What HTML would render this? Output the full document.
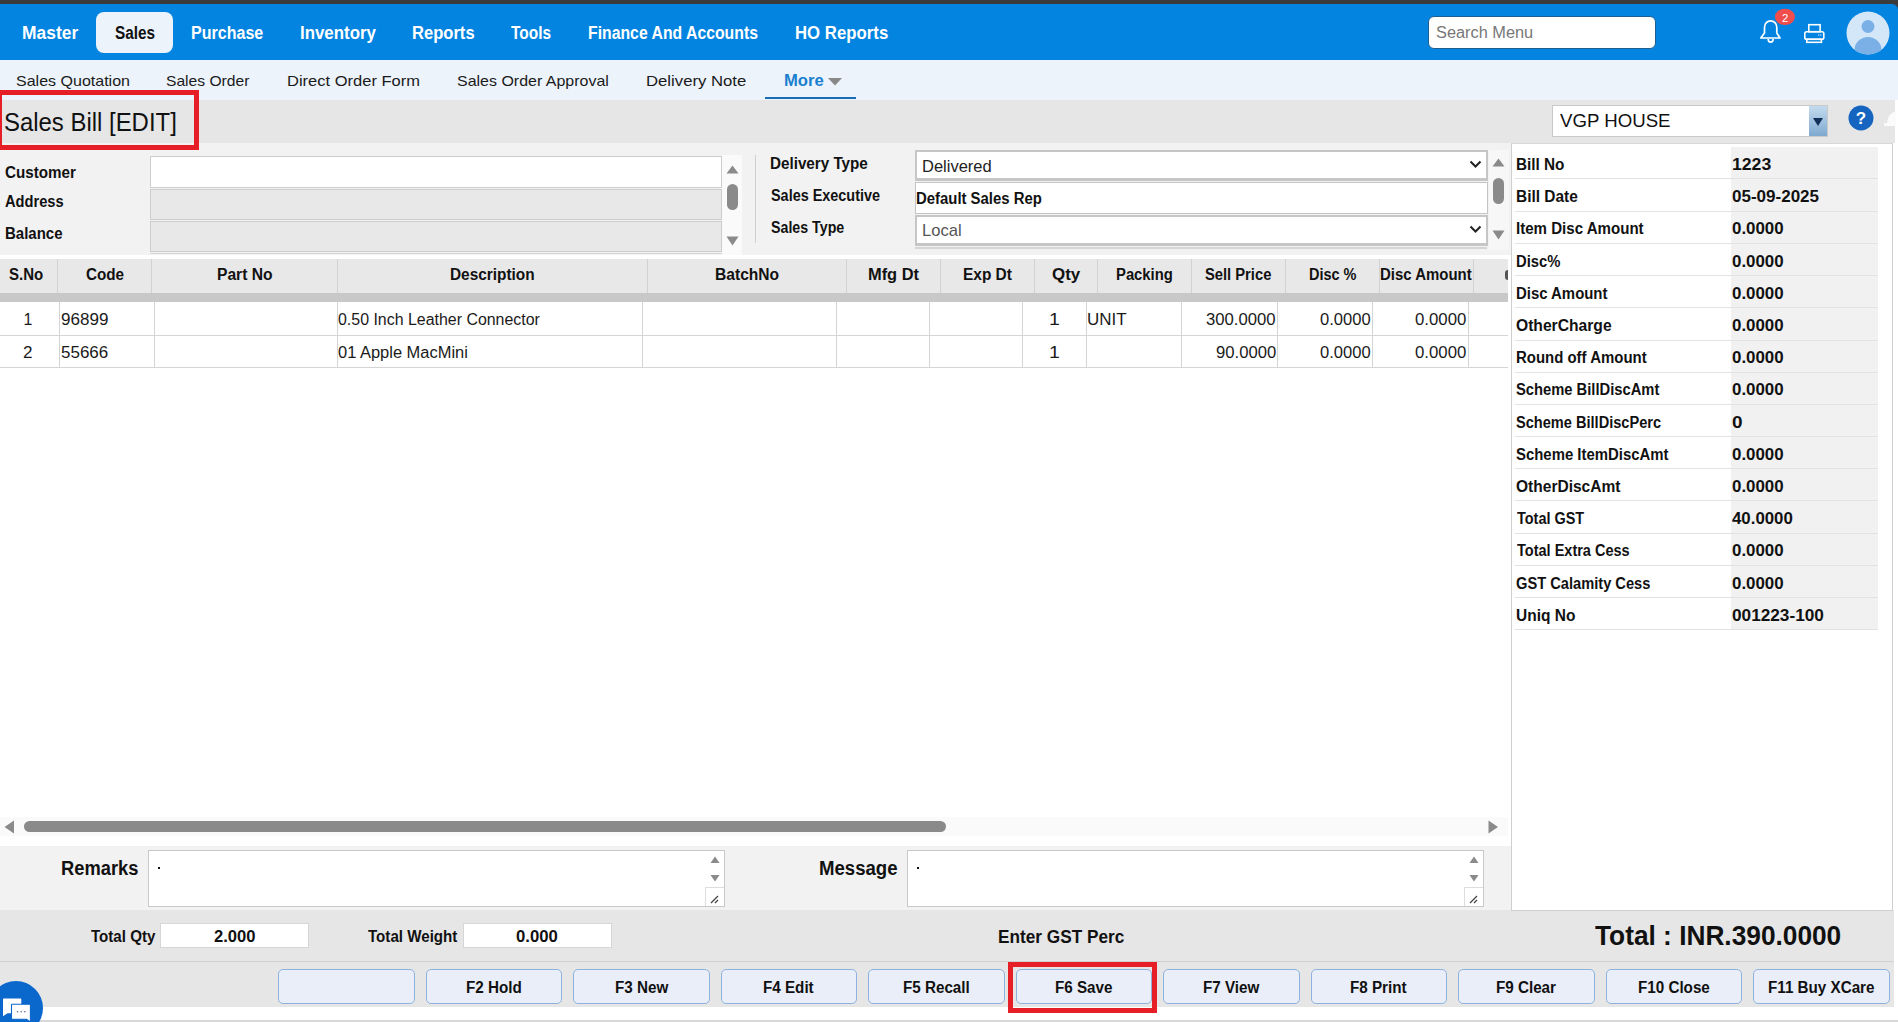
<!DOCTYPE html>
<html><head><meta charset="utf-8"><title>Sales Bill</title>
<style>
html,body{margin:0;padding:0;width:1898px;height:1022px;overflow:hidden;background:#fff;}
body{position:relative;font-family:"Liberation Sans", sans-serif;}
body>div,body>span,body>svg{position:absolute;}
span{white-space:nowrap;line-height:normal;transform-origin:0 0;}
</style></head><body>
<div style="left:0px;top:0px;width:1898px;height:14px;background:#3b3b3b"></div>
<div style="left:0px;top:4px;width:1898px;height:56px;background:#0284e0;border-top-right-radius:6px"></div>
<div style="left:0px;top:60px;width:1898px;height:40px;background:#ecf3fb"></div>
<div style="left:0px;top:100px;width:1895px;height:43px;background:#e6e6e6"></div>
<div style="left:0px;top:143px;width:1512px;height:112px;background:#f2f2f2"></div>
<div style="left:0px;top:255px;width:1512px;height:4px;background:#fff"></div>
<div style="left:96px;top:12px;width:77px;height:41px;background:#edf3fa;border-radius:8px"></div>
<span style="left:21.53px;top:22.71px;font-size:18px;font-weight:bold;color:#fff;transform:scaleX(0.9691);">Master</span>
<span style="left:114.56px;top:22.71px;font-size:18px;font-weight:bold;color:#111;transform:scaleX(0.8519);">Sales</span>
<span style="left:191.23px;top:22.71px;font-size:18px;font-weight:bold;color:#fff;transform:scaleX(0.8911);">Purchase</span>
<span style="left:299.77px;top:22.71px;font-size:18px;font-weight:bold;color:#fff;transform:scaleX(0.9371);">Inventory</span>
<span style="left:411.89px;top:22.71px;font-size:18px;font-weight:bold;color:#fff;transform:scaleX(0.9203);">Reports</span>
<span style="left:510.83px;top:22.71px;font-size:18px;font-weight:bold;color:#fff;transform:scaleX(0.8585);">Tools</span>
<span style="left:587.74px;top:22.71px;font-size:18px;font-weight:bold;color:#fff;transform:scaleX(0.8774);">Finance And Accounts</span>
<span style="left:794.78px;top:22.71px;font-size:18px;font-weight:bold;color:#fff;transform:scaleX(0.9320);">HO Reports</span>
<div style="left:1428px;top:16px;width:228px;height:33px;background:#fff;border:1px solid #1f5f8f;border-radius:6px;box-sizing:border-box"></div>
<span style="left:1435.56px;top:23.52px;font-size:16px;color:#777;transform:scaleX(1.0206);">Search Menu</span>
<svg style="left:1755px;top:6px" width="50" height="42" viewBox="0 0 50 42">
<path d="M5.8 32 H25 L21.8 27 V21.5 C21.8 17.5 19 14.9 15.65 14.9 C12.3 14.9 9.5 17.5 9.5 21.5 V27 Z" fill="none" stroke="#fff" stroke-width="1.7" stroke-linejoin="round"/>
<path d="M13.2 33 C13.2 37.2 18.1 37.2 18.1 33" fill="none" stroke="#fff" stroke-width="1.7"/>
<ellipse cx="29.9" cy="10.9" rx="10" ry="8.2" fill="#f04d4d"/>
<text x="30.2" y="16" font-family="Liberation Sans" font-size="11.5" fill="#fff" text-anchor="middle">2</text>
</svg>
<svg style="left:1800px;top:20px" width="30" height="28" viewBox="0 0 30 28">
<rect x="8.8" y="4.7" width="11.3" height="7" fill="none" stroke="#fff" stroke-width="1.6"/>
<rect x="4.8" y="11.8" width="19" height="7.4" rx="1.8" fill="none" stroke="#fff" stroke-width="1.6"/>
<rect x="6.8" y="19.3" width="14.6" height="3" fill="#0284e0" stroke="#fff" stroke-width="1.6"/>
<circle cx="18.7" cy="15" r="0.7" fill="#cfe6ff"/><circle cx="20.8" cy="15" r="0.7" fill="#cfe6ff"/>
</svg>
<svg style="left:1845.5px;top:11.3px" width="44" height="44" viewBox="0 0 44 44">
<defs><clipPath id="av"><circle cx="22" cy="22" r="21.5"/></clipPath></defs>
<circle cx="22" cy="22" r="21.5" fill="#d4e7f9"/>
<g clip-path="url(#av)"><circle cx="22" cy="15.5" r="6.5" fill="#7ab0e6"/><ellipse cx="22" cy="39" rx="13.5" ry="13" fill="#7ab0e6"/></g>
</svg>
<span style="left:15.67px;top:72.42px;font-size:15px;color:#1a1a1a;transform:scaleX(1.0678);">Sales Quotation</span>
<span style="left:166.39px;top:72.42px;font-size:15px;color:#1a1a1a;transform:scaleX(1.0417);">Sales Order</span>
<span style="left:287.35px;top:72.42px;font-size:15px;color:#1a1a1a;transform:scaleX(1.1010);">Direct Order Form</span>
<span style="left:457.17px;top:72.42px;font-size:15px;color:#1a1a1a;transform:scaleX(1.0648);">Sales Order Approval</span>
<span style="left:646.23px;top:72.42px;font-size:15px;color:#1a1a1a;transform:scaleX(1.1142);">Delivery Note</span>
<span style="left:783.89px;top:71.52px;font-size:16px;font-weight:bold;color:#1a7fd0;transform:scaleX(1.0380);">More</span>
<svg style="left:828px;top:78px" width="14" height="8" viewBox="0 0 14 8"><path d="M0 0 H14 L7 7.5 Z" fill="#888"/></svg>
<div style="left:765px;top:97px;width:91px;height:2.4px;background:#1a6db5"></div>
<span style="left:3.91px;top:107.46px;font-size:26px;color:#111;transform:scaleX(0.9199);">Sales Bill [EDIT]</span>
<div style="left:-3px;top:90px;width:202px;height:60px;border:5px solid #e61e25;box-sizing:border-box;background:transparent"></div>
<div style="left:1552px;top:105px;width:276px;height:32px;background:#fff;border:1px solid #c9c9c9;box-sizing:border-box"></div>
<div style="left:1809px;top:106px;width:18px;height:30px;background:linear-gradient(#c3dbef,#7fa9d0)"></div>
<svg style="left:1812px;top:117px" width="12" height="10" viewBox="0 0 12 10"><path d="M1 1 H11 L6 9 Z" fill="#12305a"/></svg>
<span style="left:1559.92px;top:109.80px;font-size:19px;color:#111;transform:scaleX(0.9815);">VGP HOUSE</span>
<svg style="left:1847px;top:104px" width="28" height="28" viewBox="0 0 28 28"><circle cx="14" cy="14" r="12.5" fill="#1565c0"/>
<text x="14" y="20" font-family="Liberation Sans" font-weight="bold" font-size="17" fill="#fff" text-anchor="middle">?</text></svg>
<svg style="left:1884px;top:108px" width="12" height="20" viewBox="0 0 12 20"><path d="M3 17 C3 12 4 8 8 5 C10 3.5 12 3 12 3 V17 Z" fill="#fbfbfb"/><rect x="0" y="15" width="12" height="3" fill="#fbfbfb"/></svg>
<span style="left:5.08px;top:163.52px;font-size:16px;font-weight:bold;color:#111;transform:scaleX(0.9488);">Customer</span>
<span style="left:5.33px;top:192.52px;font-size:16px;font-weight:bold;color:#111;transform:scaleX(0.9163);">Address</span>
<span style="left:4.70px;top:224.52px;font-size:16px;font-weight:bold;color:#111;transform:scaleX(0.9372);">Balance</span>
<div style="left:150px;top:156px;width:572px;height:32px;background:#fff;border:1px solid #cdcdcd;box-sizing:border-box"></div>
<div style="left:150px;top:189px;width:572px;height:31px;background:#e8e8e8;border:1px solid #cdcdcd;box-sizing:border-box"></div>
<div style="left:150px;top:221px;width:572px;height:31px;background:#e8e8e8;border:1px solid #cdcdcd;box-sizing:border-box"></div>
<div style="left:150px;top:253px;width:572px;height:1px;background:#d6d6d6"></div>
<div style="left:722px;top:155px;width:20px;height:100px;background:#fafafa"></div>
<svg style="left:726px;top:165px" width="13" height="9" viewBox="0 0 13 9"><path d="M0.5 8.5 H12.5 L6.5 0.5 Z" fill="#8a8a8a"/></svg>
<div style="left:727px;top:184px;width:11px;height:26px;background:#8a8a8a;border-radius:6px"></div>
<svg style="left:726px;top:236px" width="13" height="10" viewBox="0 0 13 10"><path d="M0.5 0.5 H12.5 L6.5 9.5 Z" fill="#8a8a8a"/></svg>
<div style="left:755px;top:155px;width:1px;height:88px;background:#cfcfcf"></div>
<span style="left:770.38px;top:154.52px;font-size:16px;font-weight:bold;color:#111;transform:scaleX(0.9508);">Delivery Type</span>
<span style="left:770.98px;top:186.52px;font-size:16px;font-weight:bold;color:#111;transform:scaleX(0.9011);">Sales Executive</span>
<span style="left:770.99px;top:219.02px;font-size:16px;font-weight:bold;color:#111;transform:scaleX(0.8887);">Sales Type</span>
<div style="left:915px;top:150px;width:573px;height:31px;background:#fff;border:2px solid #c6c6c6;border-bottom-width:3px;box-sizing:border-box"></div>
<div style="left:915px;top:182px;width:573px;height:32px;background:#fff;border:1px solid #c4c4c4;border-left-width:1.5px;box-sizing:border-box"></div>
<div style="left:915px;top:215px;width:573px;height:31px;background:#fff;border:2px solid #c6c6c6;border-bottom-width:3px;box-sizing:border-box"></div>
<div style="left:915px;top:247px;width:572px;height:2px;background:#d5d5d5"></div>
<span style="left:921.95px;top:156.61px;font-size:17px;color:#222;transform:scaleX(0.9709);">Delivered</span>
<span style="left:916.00px;top:189.52px;font-size:16px;font-weight:bold;color:#111;transform:scaleX(0.9308);">Default Sales Rep</span>
<span style="left:921.94px;top:220.61px;font-size:17px;color:#555;transform:scaleX(0.9735);">Local</span>
<svg style="left:1469px;top:160px" width="13" height="9" viewBox="0 0 13 9"><path d="M1.5 1.5 L6.5 6.5 L11.5 1.5" fill="none" stroke="#222" stroke-width="2"/></svg>
<svg style="left:1469px;top:225px" width="13" height="9" viewBox="0 0 13 9"><path d="M1.5 1.5 L6.5 6.5 L11.5 1.5" fill="none" stroke="#222" stroke-width="2"/></svg>
<div style="left:1489px;top:150px;width:20px;height:100px;background:#f7f7f7"></div>
<svg style="left:1492px;top:158px" width="13" height="9" viewBox="0 0 13 9"><path d="M0.5 8.5 H12.5 L6.5 0.5 Z" fill="#8a8a8a"/></svg>
<div style="left:1493px;top:178px;width:11px;height:26px;background:#8a8a8a;border-radius:6px"></div>
<svg style="left:1492px;top:230px" width="13" height="10" viewBox="0 0 13 10"><path d="M0.5 0.5 H12.5 L6.5 9.5 Z" fill="#8a8a8a"/></svg>
<div style="left:0px;top:259px;width:1508px;height:34px;background:#e8e8e8"></div>
<div style="left:0px;top:293px;width:1508px;height:9px;background:#c8c8c8"></div>
<div style="left:57px;top:259px;width:1px;height:34px;background:#d2d2d2"></div>
<div style="left:151px;top:259px;width:1px;height:34px;background:#d2d2d2"></div>
<div style="left:337px;top:259px;width:1px;height:34px;background:#d2d2d2"></div>
<div style="left:647px;top:259px;width:1px;height:34px;background:#d2d2d2"></div>
<div style="left:846px;top:259px;width:1px;height:34px;background:#d2d2d2"></div>
<div style="left:940px;top:259px;width:1px;height:34px;background:#d2d2d2"></div>
<div style="left:1034px;top:259px;width:1px;height:34px;background:#d2d2d2"></div>
<div style="left:1097px;top:259px;width:1px;height:34px;background:#d2d2d2"></div>
<div style="left:1191px;top:259px;width:1px;height:34px;background:#d2d2d2"></div>
<div style="left:1285px;top:259px;width:1px;height:34px;background:#d2d2d2"></div>
<div style="left:1379px;top:259px;width:1px;height:34px;background:#d2d2d2"></div>
<div style="left:1473px;top:259px;width:1px;height:34px;background:#d2d2d2"></div>
<span style="left:9.17px;top:265.52px;font-size:16px;font-weight:bold;color:#111;transform:scaleX(0.9389);">S.No</span>
<span style="left:85.68px;top:265.52px;font-size:16px;font-weight:bold;color:#111;transform:scaleX(0.9511);">Code</span>
<span style="left:216.95px;top:265.52px;font-size:16px;font-weight:bold;color:#111;transform:scaleX(0.9764);">Part No</span>
<span style="left:450.27px;top:265.52px;font-size:16px;font-weight:bold;color:#111;transform:scaleX(0.9610);">Description</span>
<span style="left:714.96px;top:265.52px;font-size:16px;font-weight:bold;color:#111;transform:scaleX(0.9753);">BatchNo</span>
<span style="left:867.80px;top:265.52px;font-size:16px;font-weight:bold;color:#111;transform:scaleX(1.0249);">Mfg Dt</span>
<span style="left:962.67px;top:265.52px;font-size:16px;font-weight:bold;color:#111;transform:scaleX(0.9655);">Exp Dt</span>
<span style="left:1051.51px;top:265.52px;font-size:16px;font-weight:bold;color:#111;transform:scaleX(1.0567);">Qty</span>
<span style="left:1116.21px;top:265.52px;font-size:16px;font-weight:bold;color:#111;transform:scaleX(0.9254);">Packing</span>
<span style="left:1205.28px;top:265.52px;font-size:16px;font-weight:bold;color:#111;transform:scaleX(0.9206);">Sell Price</span>
<span style="left:1308.53px;top:265.52px;font-size:16px;font-weight:bold;color:#111;transform:scaleX(0.9043);">Disc %</span>
<span style="left:1380.00px;top:265.52px;font-size:16px;font-weight:bold;color:#111;transform:scaleX(0.9342);">Disc Amount</span>
<div style="left:1505px;top:270px;width:3px;height:10px;background:#555;border-radius:3px 0 0 3px"></div>
<div style="left:0px;top:302px;width:1508px;height:66px;background:#fff"></div>
<div style="left:59px;top:302px;width:1px;height:66px;background:#d4d4d4"></div>
<div style="left:154px;top:302px;width:1px;height:66px;background:#d4d4d4"></div>
<div style="left:337px;top:302px;width:1px;height:66px;background:#d4d4d4"></div>
<div style="left:642px;top:302px;width:1px;height:66px;background:#d4d4d4"></div>
<div style="left:836px;top:302px;width:1px;height:66px;background:#d4d4d4"></div>
<div style="left:929px;top:302px;width:1px;height:66px;background:#d4d4d4"></div>
<div style="left:1022px;top:302px;width:1px;height:66px;background:#d4d4d4"></div>
<div style="left:1086px;top:302px;width:1px;height:66px;background:#d4d4d4"></div>
<div style="left:1181px;top:302px;width:1px;height:66px;background:#d4d4d4"></div>
<div style="left:1277px;top:302px;width:1px;height:66px;background:#d4d4d4"></div>
<div style="left:1372px;top:302px;width:1px;height:66px;background:#d4d4d4"></div>
<div style="left:1468px;top:302px;width:1px;height:66px;background:#d4d4d4"></div>
<div style="left:0px;top:335px;width:1508px;height:1px;background:#d4d4d4"></div>
<div style="left:0px;top:367px;width:1508px;height:1px;background:#d4d4d4"></div>
<span style="left:23.38px;top:310.52px;font-size:16px;color:#1a1a1a;">1</span>
<span style="left:60.80px;top:310.52px;font-size:16px;color:#1a1a1a;transform:scaleX(1.0655);">96899</span>
<span style="left:338.38px;top:310.52px;font-size:16px;color:#1a1a1a;transform:scaleX(0.9955);">0.50 Inch Leather Connector</span>
<span style="left:1049.32px;top:310.52px;font-size:16px;color:#1a1a1a;transform:scaleX(1.2177);">1</span>
<span style="left:1087.39px;top:310.52px;font-size:16px;color:#1a1a1a;transform:scaleX(1.0608);">UNIT</span>
<span style="left:1206.36px;top:310.52px;font-size:16px;color:#1a1a1a;transform:scaleX(1.0427);">300.0000</span>
<span style="left:1320.25px;top:310.52px;font-size:16px;color:#1a1a1a;transform:scaleX(1.0338);">0.0000</span>
<span style="left:1415.34px;top:310.52px;font-size:16px;color:#1a1a1a;transform:scaleX(1.0485);">0.0000</span>
<span style="left:22.64px;top:343.52px;font-size:16px;color:#1a1a1a;transform:scaleX(1.0701);">2</span>
<span style="left:60.92px;top:343.52px;font-size:16px;color:#1a1a1a;transform:scaleX(1.0615);">55666</span>
<span style="left:338.36px;top:343.52px;font-size:16px;color:#1a1a1a;transform:scaleX(1.0281);">01 Apple MacMini</span>
<span style="left:1049.32px;top:343.52px;font-size:16px;color:#1a1a1a;transform:scaleX(1.2177);">1</span>
<span style="left:1215.72px;top:343.52px;font-size:16px;color:#1a1a1a;transform:scaleX(1.0414);">90.0000</span>
<span style="left:1320.25px;top:343.52px;font-size:16px;color:#1a1a1a;transform:scaleX(1.0338);">0.0000</span>
<span style="left:1415.34px;top:343.52px;font-size:16px;color:#1a1a1a;transform:scaleX(1.0485);">0.0000</span>
<div style="left:0px;top:368px;width:1508px;height:448px;background:#fff"></div>
<div style="left:0px;top:817px;width:1508px;height:19px;background:#fafafa"></div>
<svg style="left:4px;top:820px" width="11" height="14" viewBox="0 0 11 14"><path d="M10 0.5 V13.5 L0.5 7 Z" fill="#8a8a8a"/></svg>
<div style="left:24px;top:821px;width:922px;height:11px;background:#8a8a8a;border-radius:6px"></div>
<svg style="left:1488px;top:820px" width="11" height="14" viewBox="0 0 11 14"><path d="M0.5 0.5 V13.5 L10 7 Z" fill="#8a8a8a"/></svg>
<div style="left:0px;top:836px;width:1511px;height:10px;background:#fff"></div>
<div style="left:1511px;top:143px;width:382px;height:768px;background:#fff;border:1px solid #cfcfcf;border-top-color:#d9d9d9;box-sizing:border-box"></div>
<div style="left:1731px;top:147px;width:147px;height:483.00000000000006px;background:#f1f1f1"></div>
<div style="left:1515px;top:178px;width:363px;height:1px;background:#e2e2e2"></div>
<span style="left:1515.78px;top:155.92px;font-size:16px;font-weight:bold;color:#111;transform:scaleX(0.9557);">Bill No</span>
<span style="left:1731.59px;top:155.92px;font-size:16px;font-weight:bold;color:#111;transform:scaleX(1.1027);">1223</span>
<div style="left:1515px;top:211px;width:363px;height:1px;background:#e2e2e2"></div>
<span style="left:1515.77px;top:188.12px;font-size:16px;font-weight:bold;color:#111;transform:scaleX(0.9648);">Bill Date</span>
<span style="left:1732.03px;top:188.12px;font-size:16px;font-weight:bold;color:#111;transform:scaleX(1.0636);">05-09-2025</span>
<div style="left:1515px;top:243px;width:363px;height:1px;background:#e2e2e2"></div>
<span style="left:1515.79px;top:220.32px;font-size:16px;font-weight:bold;color:#111;transform:scaleX(0.9425);">Item Disc Amount</span>
<span style="left:1732.03px;top:220.32px;font-size:16px;font-weight:bold;color:#111;transform:scaleX(1.0556);">0.0000</span>
<div style="left:1515px;top:275px;width:363px;height:1px;background:#e2e2e2"></div>
<span style="left:1515.81px;top:252.52px;font-size:16px;font-weight:bold;color:#111;transform:scaleX(0.9241);">Disc%</span>
<span style="left:1732.03px;top:252.52px;font-size:16px;font-weight:bold;color:#111;transform:scaleX(1.0556);">0.0000</span>
<div style="left:1515px;top:307px;width:363px;height:1px;background:#e2e2e2"></div>
<span style="left:1515.80px;top:284.72px;font-size:16px;font-weight:bold;color:#111;transform:scaleX(0.9322);">Disc Amount</span>
<span style="left:1732.03px;top:284.72px;font-size:16px;font-weight:bold;color:#111;transform:scaleX(1.0556);">0.0000</span>
<div style="left:1515px;top:340px;width:363px;height:1px;background:#e2e2e2"></div>
<span style="left:1516.16px;top:316.92px;font-size:16px;font-weight:bold;color:#111;transform:scaleX(0.9773);">OtherCharge</span>
<span style="left:1732.03px;top:316.92px;font-size:16px;font-weight:bold;color:#111;transform:scaleX(1.0556);">0.0000</span>
<div style="left:1515px;top:372px;width:363px;height:1px;background:#e2e2e2"></div>
<span style="left:1515.80px;top:349.12px;font-size:16px;font-weight:bold;color:#111;transform:scaleX(0.9344);">Round off Amount</span>
<span style="left:1732.03px;top:349.12px;font-size:16px;font-weight:bold;color:#111;transform:scaleX(1.0556);">0.0000</span>
<div style="left:1515px;top:404px;width:363px;height:1px;background:#e2e2e2"></div>
<span style="left:1516.38px;top:381.32px;font-size:16px;font-weight:bold;color:#111;transform:scaleX(0.9209);">Scheme BillDiscAmt</span>
<span style="left:1732.03px;top:381.32px;font-size:16px;font-weight:bold;color:#111;transform:scaleX(1.0556);">0.0000</span>
<div style="left:1515px;top:436px;width:363px;height:1px;background:#e2e2e2"></div>
<span style="left:1516.38px;top:413.52px;font-size:16px;font-weight:bold;color:#111;transform:scaleX(0.9111);">Scheme BillDiscPerc</span>
<span style="left:1731.95px;top:413.52px;font-size:16px;font-weight:bold;color:#111;transform:scaleX(1.1828);">0</span>
<div style="left:1515px;top:468px;width:363px;height:1px;background:#e2e2e2"></div>
<span style="left:1516.37px;top:445.72px;font-size:16px;font-weight:bold;color:#111;transform:scaleX(0.9321);">Scheme ItemDiscAmt</span>
<span style="left:1732.03px;top:445.72px;font-size:16px;font-weight:bold;color:#111;transform:scaleX(1.0556);">0.0000</span>
<div style="left:1515px;top:500px;width:363px;height:1px;background:#e2e2e2"></div>
<span style="left:1516.16px;top:477.92px;font-size:16px;font-weight:bold;color:#111;transform:scaleX(0.9707);">OtherDiscAmt</span>
<span style="left:1732.03px;top:477.92px;font-size:16px;font-weight:bold;color:#111;transform:scaleX(1.0556);">0.0000</span>
<div style="left:1515px;top:533px;width:363px;height:1px;background:#e2e2e2"></div>
<span style="left:1516.64px;top:510.12px;font-size:16px;font-weight:bold;color:#111;transform:scaleX(0.9029);">Total GST</span>
<span style="left:1732.45px;top:510.12px;font-size:16px;font-weight:bold;color:#111;transform:scaleX(1.0520);">40.0000</span>
<div style="left:1515px;top:565px;width:363px;height:1px;background:#e2e2e2"></div>
<span style="left:1516.64px;top:542.32px;font-size:16px;font-weight:bold;color:#111;transform:scaleX(0.9073);">Total Extra Cess</span>
<span style="left:1732.03px;top:542.32px;font-size:16px;font-weight:bold;color:#111;transform:scaleX(1.0556);">0.0000</span>
<div style="left:1515px;top:597px;width:363px;height:1px;background:#e2e2e2"></div>
<span style="left:1516.20px;top:574.52px;font-size:16px;font-weight:bold;color:#111;transform:scaleX(0.9160);">GST Calamity Cess</span>
<span style="left:1732.03px;top:574.52px;font-size:16px;font-weight:bold;color:#111;transform:scaleX(1.0556);">0.0000</span>
<div style="left:1515px;top:629px;width:363px;height:1px;background:#e2e2e2"></div>
<span style="left:1515.87px;top:606.72px;font-size:16px;font-weight:bold;color:#111;transform:scaleX(0.9676);">Uniq No</span>
<span style="left:1732.02px;top:606.72px;font-size:16px;font-weight:bold;color:#111;transform:scaleX(1.0758);">001223-100</span>
<div style="left:0px;top:846px;width:1511px;height:64px;background:#f2f2f2"></div>
<span style="left:61.37px;top:856.89px;font-size:20px;font-weight:bold;color:#111;transform:scaleX(0.9157);">Remarks</span>
<span style="left:818.76px;top:856.89px;font-size:20px;font-weight:bold;color:#111;transform:scaleX(0.9300);">Message</span>
<div style="left:148px;top:850px;width:577px;height:57px;background:#fff;border:1px solid #c9c9c9;box-sizing:border-box"></div>
<div style="left:158px;top:867px;width:2px;height:2px;background:#111"></div>
<svg style="left:710px;top:856px" width="10" height="8" viewBox="0 0 10 8"><path d="M0.5 7 H9.5 L5 0.5 Z" fill="#8a8a8a"/></svg>
<svg style="left:710px;top:874px" width="10" height="8" viewBox="0 0 10 8"><path d="M0.5 1 H9.5 L5 7.5 Z" fill="#8a8a8a"/></svg>
<div style="left:705px;top:887px;width:19px;height:19px;background:#fff;border-left:1px solid #ddd;border-top:1px solid #ddd;box-sizing:border-box"></div>
<svg style="left:710px;top:894px" width="10" height="10" viewBox="0 0 10 10"><path d="M1 9 L8 2 M5 9 L8 6" stroke="#444" stroke-width="1.3"/></svg>
<div style="left:907px;top:850px;width:577px;height:57px;background:#fff;border:1px solid #c9c9c9;box-sizing:border-box"></div>
<div style="left:917px;top:867px;width:2px;height:2px;background:#111"></div>
<svg style="left:1469px;top:856px" width="10" height="8" viewBox="0 0 10 8"><path d="M0.5 7 H9.5 L5 0.5 Z" fill="#8a8a8a"/></svg>
<svg style="left:1469px;top:874px" width="10" height="8" viewBox="0 0 10 8"><path d="M0.5 1 H9.5 L5 7.5 Z" fill="#8a8a8a"/></svg>
<div style="left:1464px;top:887px;width:19px;height:19px;background:#fff;border-left:1px solid #ddd;border-top:1px solid #ddd;box-sizing:border-box"></div>
<svg style="left:1469px;top:894px" width="10" height="10" viewBox="0 0 10 10"><path d="M1 9 L8 2 M5 9 L8 6" stroke="#444" stroke-width="1.3"/></svg>
<div style="left:0px;top:910px;width:1894px;height:51px;background:#e6e6e6"></div>
<div style="left:1511px;top:910px;width:382px;height:1px;background:#cfcfcf"></div>
<div style="left:0px;top:961px;width:1894px;height:1px;background:#d0d0d0"></div>
<span style="left:91.13px;top:927.01px;font-size:17px;font-weight:bold;color:#111;transform:scaleX(0.8884);">Total Qty</span>
<div style="left:160px;top:923px;width:149px;height:25px;background:#fff;border:1px solid #d6d6d6;box-sizing:border-box"></div>
<span style="left:214.12px;top:927.01px;font-size:17px;font-weight:bold;color:#111;transform:scaleX(0.9769);">2.000</span>
<span style="left:368.33px;top:927.01px;font-size:17px;font-weight:bold;color:#111;transform:scaleX(0.8899);">Total Weight</span>
<div style="left:463px;top:923px;width:149px;height:25px;background:#fff;border:1px solid #d6d6d6;box-sizing:border-box"></div>
<span style="left:515.84px;top:927.01px;font-size:17px;font-weight:bold;color:#111;transform:scaleX(0.9837);">0.000</span>
<span style="left:998.15px;top:926.71px;font-size:18px;font-weight:bold;color:#111;transform:scaleX(0.9561);">Enter GST Perc</span>
<span style="left:1595.21px;top:920.35px;font-size:28px;font-weight:bold;color:#111;transform:scaleX(0.9381);">Total : INR.390.0000</span>
<div style="left:0px;top:962px;width:1894px;height:45px;background:#e6e6e6"></div>
<div style="left:278.4px;top:969px;width:136.5px;height:35px;background:#e9eef8;border:1px solid #8db2de;border-radius:5px;box-sizing:border-box"></div>
<div style="left:425.9px;top:969px;width:136.5px;height:35px;background:#e9eef8;border:1px solid #8db2de;border-radius:5px;box-sizing:border-box"></div>
<span style="left:466.28px;top:978.52px;font-size:16px;font-weight:bold;color:#111;transform:scaleX(0.9500);">F2 Hold</span>
<div style="left:573.4px;top:969px;width:136.5px;height:35px;background:#e9eef8;border:1px solid #8db2de;border-radius:5px;box-sizing:border-box"></div>
<span style="left:614.52px;top:978.52px;font-size:16px;font-weight:bold;color:#111;transform:scaleX(0.9500);">F3 New</span>
<div style="left:720.9px;top:969px;width:136.5px;height:35px;background:#e9eef8;border:1px solid #8db2de;border-radius:5px;box-sizing:border-box"></div>
<span style="left:763.40px;top:978.52px;font-size:16px;font-weight:bold;color:#111;transform:scaleX(0.9500);">F4 Edit</span>
<div style="left:868.4px;top:969px;width:136.5px;height:35px;background:#e9eef8;border:1px solid #8db2de;border-radius:5px;box-sizing:border-box"></div>
<span style="left:903.31px;top:978.52px;font-size:16px;font-weight:bold;color:#111;transform:scaleX(0.9500);">F5 Recall</span>
<div style="left:1015.9px;top:969px;width:136.5px;height:35px;background:#e9eef8;border:1px solid #8db2de;border-radius:5px;box-sizing:border-box"></div>
<span style="left:1055.17px;top:978.52px;font-size:16px;font-weight:bold;color:#111;transform:scaleX(0.9500);">F6 Save</span>
<div style="left:1163.4px;top:969px;width:136.5px;height:35px;background:#e9eef8;border:1px solid #8db2de;border-radius:5px;box-sizing:border-box"></div>
<span style="left:1202.83px;top:978.52px;font-size:16px;font-weight:bold;color:#111;transform:scaleX(0.9500);">F7 View</span>
<div style="left:1310.9px;top:969px;width:136.5px;height:35px;background:#e9eef8;border:1px solid #8db2de;border-radius:5px;box-sizing:border-box"></div>
<span style="left:1350.44px;top:978.52px;font-size:16px;font-weight:bold;color:#111;transform:scaleX(0.9500);">F8 Print</span>
<div style="left:1458.4px;top:969px;width:136.5px;height:35px;background:#e9eef8;border:1px solid #8db2de;border-radius:5px;box-sizing:border-box"></div>
<span style="left:1496.26px;top:978.52px;font-size:16px;font-weight:bold;color:#111;transform:scaleX(0.9500);">F9 Clear</span>
<div style="left:1605.9px;top:969px;width:136.5px;height:35px;background:#e9eef8;border:1px solid #8db2de;border-radius:5px;box-sizing:border-box"></div>
<span style="left:1638.00px;top:978.52px;font-size:16px;font-weight:bold;color:#111;transform:scaleX(0.9500);">F10 Close</span>
<div style="left:1753.4px;top:969px;width:136.5px;height:35px;background:#e9eef8;border:1px solid #8db2de;border-radius:5px;box-sizing:border-box"></div>
<span style="left:1767.76px;top:978.52px;font-size:16px;font-weight:bold;color:#111;transform:scaleX(0.9500);">F11 Buy XCare</span>
<div style="left:1008px;top:962px;width:149px;height:51px;border:5px solid #e61e25;box-sizing:border-box"></div>
<div style="left:0px;top:1020px;width:1898px;height:2px;background:#d8d8d8"></div>
<svg style="left:0px;top:975px" width="50" height="47" viewBox="0 0 50 47">
<circle cx="16" cy="33" r="27" fill="#0a67cc"/>
<path d="M3.8 23.5 H20.5 C21 23.5 21.3 23.8 21.3 24.3 V38.2 H7.5 L3 41.2 V24.3 C3 23.8 3.3 23.5 3.8 23.5 Z" fill="#fff"/>
<path d="M12.3 29.3 H29.6 C30.1 29.3 30.4 29.6 30.4 30.1 V47 L26.5 44.2 H12.3 C11.8 44.2 11.5 43.9 11.5 43.4 V30.1 C11.5 29.6 11.8 29.3 12.3 29.3 Z" fill="#fff" stroke="#0a67cc" stroke-width="1.1"/>
<circle cx="17.5" cy="36.8" r="0.8" fill="#5a6a8a"/><circle cx="21.2" cy="36.8" r="0.8" fill="#5a6a8a"/><circle cx="24.8" cy="36.8" r="0.8" fill="#5a6a8a"/>
</svg>
</body></html>
